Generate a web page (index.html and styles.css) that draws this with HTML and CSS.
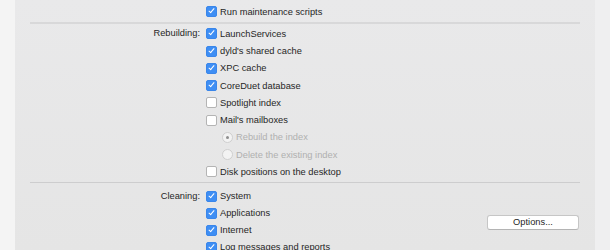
FILE: index.html
```html
<!DOCTYPE html>
<html>
<head>
<meta charset="utf-8">
<link rel="stylesheet" href="styles.css">
</head>
<body>
<div class="window">
  <div class="strip-left"></div>
  <div class="panel">
    <div class="grid top">
      <div class="label"></div>
      <div class="item"><span class="cb on"></span>Run maintenance scripts</div>
    </div>
    <div class="sep sep1"></div>
    <div class="grid rebuild">
      <div class="label">Rebuilding:</div>
      <div class="item"><span class="cb on"></span>LaunchServices</div>
      <div class="label"></div>
      <div class="item"><span class="cb on"></span>dyld's shared cache</div>
      <div class="label"></div>
      <div class="item"><span class="cb on"></span>XPC cache</div>
      <div class="label"></div>
      <div class="item"><span class="cb on"></span>CoreDuet database</div>
      <div class="label"></div>
      <div class="item"><span class="cb"></span>Spotlight index</div>
      <div class="label"></div>
      <div class="item"><span class="cb"></span>Mail's mailboxes</div>
      <div class="label"></div>
      <div class="item sub disabled"><span class="radio sel"></span>Rebuild the index</div>
      <div class="label"></div>
      <div class="item sub disabled"><span class="radio"></span>Delete the existing index</div>
      <div class="label"></div>
      <div class="item"><span class="cb"></span>Disk positions on the desktop</div>
    </div>
    <div class="sep sep2"></div>
    <div class="grid clean">
      <div class="label">Cleaning:</div>
      <div class="item"><span class="cb on"></span>System</div>
      <div class="label"></div>
      <div class="item"><span class="cb on"></span>Applications</div>
      <div class="label"></div>
      <div class="item"><span class="cb on"></span>Internet</div>
      <div class="label"></div>
      <div class="item"><span class="cb on"></span>Log messages and reports</div>
      <button class="btn">Options...</button>
    </div>
  </div>
  <div class="strip-right"></div>
</div>
</body>
</html>
```
FILE: styles.css
```css
html, body {
  margin: 0;
  padding: 0;
  width: 610px;
  height: 250px;
  overflow: hidden;
}
body {
  font-family: "Liberation Sans", Arial, sans-serif;
  font-size: 9.3px;
  color: #262626;
}
.window {
  display: flex;
  height: 250px;
}
.strip-left {
  width: 15px;
  flex: none;
  background: #f4f4f4;
}
.strip-right {
  width: 15px;
  flex: none;
  background: #efeff0;
}
.panel {
  flex: 1;
  min-width: 0;
  background: linear-gradient(#e9e9ea, #e5e5e5);
  display: flex;
  flex-direction: column;
}
.grid {
  display: grid;
  grid-template-columns: 185px minmax(0, 1fr) 110px;
  column-gap: 6px;
  padding-right: 16px;
}
.grid .label {
  grid-column: 1;
  text-align: right;
  line-height: 17.25px;
  height: 17.25px;
}
.grid .item {
  grid-column: 2;
  display: flex;
  align-items: center;
  height: 17.25px;
  white-space: nowrap;
}
.top {
  margin-top: 3px;
}
.clean .label, .clean .item {
  height: 17px;
  line-height: 17px;
}
.sep {
  margin-left: 15px;
  margin-right: 15px;
  flex: none;
}
.sep1 {
  margin-top: 1.5px;
  height: 2px;
  background: #d8d8d9;
  margin-bottom: 1.5px;
}
.sep2 {
  height: 1px;
  background: #cdcdce;
  margin-top: 1.5px;
  margin-bottom: 5px;
}
.cb {
  width: 9px;
  height: 9px;
  border: 1px solid #b4b4b4;
  border-radius: 2px;
  background: #fff;
  margin-right: 3px;
  position: relative;
  flex: none;
}
.cb.on {
  background: #3e8ef4;
  border-color: #3a86ea;
}
.cb.on::after {
  content: "";
  position: absolute;
  left: 3px;
  top: 0px;
  width: 2px;
  height: 5px;
  border: solid #fff;
  border-width: 0 1.5px 1.5px 0;
  transform: rotate(40deg);
}
.sub {
  padding-left: 16px;
}
.disabled {
  color: #b0b0b0;
}
.radio {
  width: 9px;
  height: 9px;
  border-radius: 50%;
  border: 1px solid #cfcfcf;
  background: #f3f3f3;
  margin-right: 3px;
  position: relative;
  flex: none;
}
.radio.sel::after {
  content: "";
  position: absolute;
  left: 3px;
  top: 3px;
  width: 3px;
  height: 3px;
  border-radius: 50%;
  background: #8e8e8e;
}
.btn {
  grid-column: 3;
  grid-row: 2 / span 2;
  align-self: center;
  justify-self: end;
  width: 92px;
  height: 15px;
  margin-top: 1px;
  padding: 0;
  font-family: inherit;
  font-size: 9.3px;
  color: #262626;
  background: #fff;
  border: 1px solid #c6c6c6;
  border-bottom-color: #b4b4b4;
  border-radius: 3px;
  line-height: 13px;
}
```
